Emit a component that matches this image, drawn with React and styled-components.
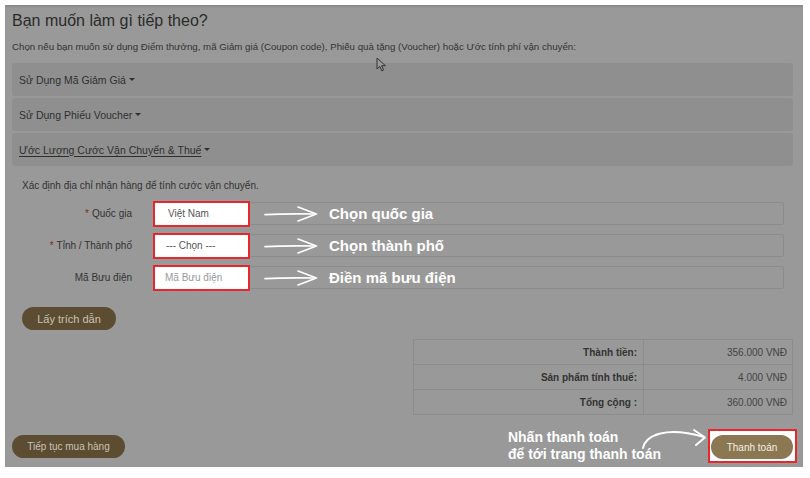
import React from "react";
import styled, { createGlobalStyle } from "styled-components";

const Global = createGlobalStyle`
  html, body { margin: 0; padding: 0; background: #fff; }
  body { font-family: "Liberation Sans", Arial, sans-serif; }
  * { box-sizing: border-box; }
`;

const Panel = styled.div`
  position: relative;
  margin: 5px 0 0 5px;
  width: 798px;
  height: 462px;
  padding: 6px 10px 0 7px;
  background: #999;
  box-shadow: inset 0 2px 3px -1px rgba(0, 0, 0, 0.18);
  display: flex;
  flex-direction: column;
`;

const Title = styled.h2`
  margin: 0;
  font-size: 16px;
  line-height: 20px;
  font-weight: normal;
  color: #2b2b2b;
`;

const Lead = styled.p`
  margin: ${(p) => p.$mt || 9}px 0 0;
  font-size: ${(p) => p.$fs || 10}px;
  line-height: 14px;
  color: #333;
`;

const Bars = styled.div`
  margin-top: 9px;
  display: flex;
  flex-direction: column;
  gap: 2px;
`;

const Bar = styled.div`
  height: 33px;
  border-radius: 3px;
  background: #8f8f8f;
  display: flex;
  align-items: center;
  padding-left: 7px;
  font-size: 10.5px;
  color: #2f2f2f;
`;

const BarText = styled.span`
  text-decoration: ${(p) => (p.$active ? "underline" : "none")};
  text-underline-offset: 2px;
`;

const Caret = styled.span`
  display: inline-block;
  margin-left: 3px;
  width: 0;
  height: 0;
  border-left: 3px solid transparent;
  border-right: 3px solid transparent;
  border-top: 3px solid #2f2f2f;
  vertical-align: middle;
`;

const Section = styled.div`
  padding: 0 9px 0 10px;
`;

const Rows = styled.div`
  margin-top: 9px;
  display: flex;
  flex-direction: column;
  gap: 9px;
`;

const Row = styled.div`
  display: grid;
  grid-template-columns: 110px 1fr;
  column-gap: 21px;
  align-items: center;
  height: 23px;
`;

const Label = styled.label`
  text-align: right;
  font-size: 10px;
  color: #333;
`;

const Star = styled.span`
  color: #8e2424;
  margin-right: 3px;
`;

const Field = styled.div`
  height: 23px;
  border: 1px solid #8b8b8b;
  border-radius: 2px;
  background: #999;
  display: flex;
  align-items: center;
`;

const Highlight = styled.div`
  flex: none;
  width: 97px;
  height: 26px;
  margin-left: -1px;
  border: 2px solid #e8262b;
  background: #fff;
  display: flex;
  align-items: center;
  padding-left: ${(p) => p.$pl || 13}px;
  font-size: 10px;
  color: ${(p) => (p.$placeholder ? "#9a9a9a" : "#555")};
`;

const Note = styled.span`
  margin-left: 9px;
  font-size: 15px;
  font-weight: bold;
  color: #fff;
`;

const PillButton = styled.button`
  border: none;
  height: ${(p) => p.$h || 23}px;
  width: ${(p) => p.$w}px;
  border-radius: 12px;
  background: ${(p) => (p.$bright ? "#8b7752" : "#5b4c32")};
  color: ${(p) => (p.$bright ? "#f4efe4" : "#cbc3b3")};
  font-family: "Liberation Sans", Arial, sans-serif;
  font-size: ${(p) => p.$fs || 10}px;
  padding: 0;
  cursor: pointer;
`;

const QuoteWrap = styled.div`
  margin-top: 18px;
`;

const Totals = styled.table`
  margin: 9px 0 0 auto;
  width: 380px;
  border-collapse: collapse;
  font-size: 10px;
`;

const Cell = styled.td`
  height: 25px;
  padding: 0 ${(p) => (p.$label ? 6 : 5)}px 0 0;
  border: 1px solid #8c8c8c;
  text-align: right;
  width: ${(p) => (p.$label ? "230px" : "auto")};
  font-weight: ${(p) => (p.$label ? "bold" : "normal")};
  color: ${(p) => (p.$label ? "#333" : "#444")};
`;

const BottomRow = styled.div`
  margin-top: 14px;
  display: flex;
  justify-content: space-between;
  align-items: center;
`;

const CheckoutGroup = styled.div`
  position: relative;
  display: flex;
  align-items: center;
  margin-right: -4px;
`;

const CheckoutNote = styled.div`
  margin-right: 47px;
  font-size: 14px;
  line-height: 17px;
  font-weight: bold;
  color: #fff;
`;

const RedBox = styled.div`
  border: 2px solid #e8262b;
  background: #fff;
  padding: 4px 2px 2px 1px;
  display: flex;
`;

const CurveArrow = styled.svg`
  position: absolute;
  right: 89px;
  top: -5px;
`;

const Cursor = styled.svg`
  position: absolute;
  left: 371px;
  top: 52px;
`;

function StraightArrow() {
  return (
    <svg width="56" height="18" viewBox="0 0 56 18" style={{ marginLeft: 14, flex: "none" }}>
      <path d="M1 9.6 Q 20 8.6 52 9" stroke="#fff" strokeWidth="1.6" fill="none" strokeLinecap="round" />
      <path d="M34 2 L52.5 9 L34 16" stroke="#fff" strokeWidth="1.6" fill="none" strokeLinecap="round" strokeLinejoin="round" />
    </svg>
  );
}

const rows = [
  { label: "Quốc gia", req: true, value: "Việt Nam", note: "Chọn quốc gia", pl: 13 },
  { label: "Tỉnh / Thành phố", req: true, value: "--- Chọn ---", note: "Chọn thành phố", pl: 11 },
  { label: "Mã Bưu điện", req: false, value: "Mã Bưu điện", note: "Điền mã bưu điện", placeholder: true, pl: 10 },
];

const totals = [
  ["Thành tiền:", "356.000 VNĐ"],
  ["Sản phẩm tính thuế:", "4.000 VNĐ"],
  ["Tổng cộng :", "360.000 VNĐ"],
];

export default function App() {
  return (
    <>
      <Global />
      <Panel>
        <Title>Bạn muốn làm gì tiếp theo?</Title>
        <Lead $fs={9.7}>
          Chọn nếu bạn muốn sử dụng Điểm thưởng, mã Giảm giá (Coupon code), Phiếu quà tặng (Voucher) hoặc Ước tính phí vận chuyển:
        </Lead>
        <Bars>
          <Bar>
            <BarText>Sử Dụng Mã Giảm Giá</BarText>
            <Caret />
          </Bar>
          <Bar>
            <BarText>Sử Dụng Phiếu Voucher</BarText>
            <Caret />
          </Bar>
          <Bar>
            <BarText $active>Ước Lượng Cước Vận Chuyển &amp; Thuế </BarText>
            <Caret />
          </Bar>
        </Bars>
        <Section>
          <Lead $mt={13}>Xác định địa chỉ nhận hàng để tính cước vận chuyển.</Lead>
          <Rows>
            {rows.map((r) => (
              <Row key={r.label}>
                <Label>
                  {r.req && <Star>*</Star>}
                  {r.label}
                </Label>
                <Field>
                  <Highlight $placeholder={r.placeholder} $pl={r.pl}>
                    {r.value}
                  </Highlight>
                  <StraightArrow />
                  <Note>{r.note}</Note>
                </Field>
              </Row>
            ))}
          </Rows>
          <QuoteWrap>
            <PillButton $w={94} $fs={11}>Lấy trích dẫn</PillButton>
          </QuoteWrap>
        </Section>
        <Totals>
          <tbody>
            {totals.map(([k, v]) => (
              <tr key={k}>
                <Cell $label>{k}</Cell>
                <Cell>{v}</Cell>
              </tr>
            ))}
          </tbody>
        </Totals>
        <BottomRow>
          <PillButton $w={113}>Tiếp tục mua hàng</PillButton>
          <CheckoutGroup>
            <CheckoutNote>
              Nhấn thanh toán
              <br />
              để tới trang thanh toán
            </CheckoutNote>
            <CurveArrow width="70" height="28" viewBox="0 0 70 28">
              <path d="M5 24 C 8 11, 28 2, 66 13" stroke="#fff" strokeWidth="2" fill="none" strokeLinecap="round" />
              <path d="M56 6 L67 13.5 L58 21" stroke="#fff" strokeWidth="2" fill="none" strokeLinecap="round" strokeLinejoin="round" />
            </CurveArrow>
            <RedBox>
              <PillButton $bright $w={82} $h={24}>Thanh toán</PillButton>
            </RedBox>
          </CheckoutGroup>
        </BottomRow>
        <Cursor width="11" height="15" viewBox="0 0 11 15">
          <path d="M1 1 L1 12 L3.8 9.4 L5.8 13.8 L7.6 13 L5.6 8.7 L9.4 8.7 Z" fill="#999" stroke="#333" strokeWidth="1" strokeLinejoin="round" />
        </Cursor>
      </Panel>
    </>
  );
}
